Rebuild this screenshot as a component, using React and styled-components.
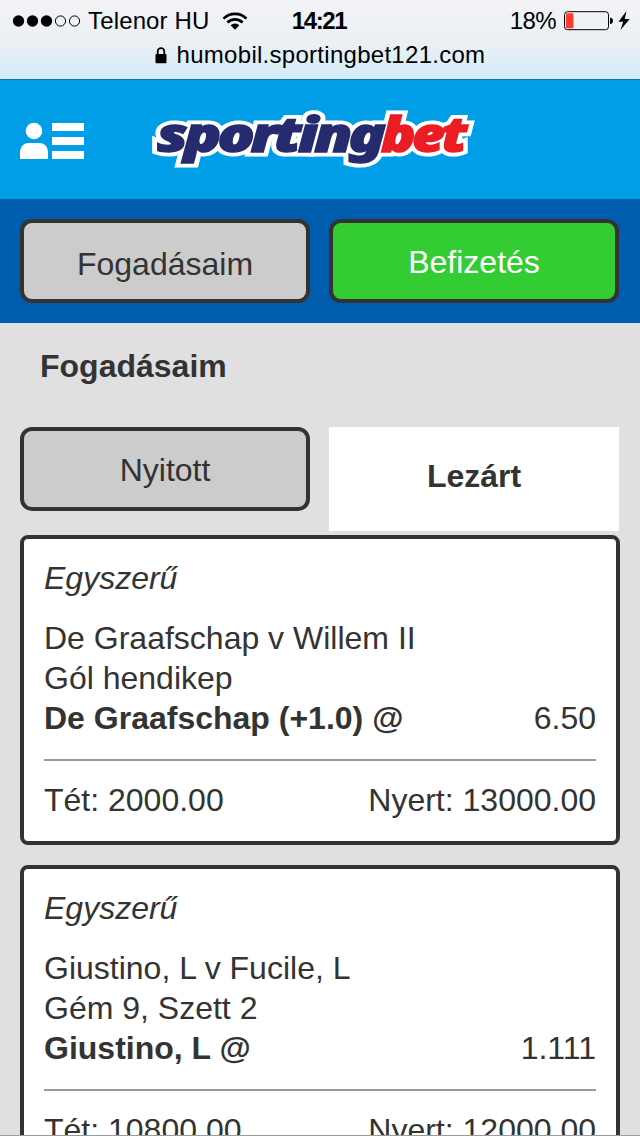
import React from 'react'
import styled, { createGlobalStyle } from 'styled-components'

const GlobalStyle = createGlobalStyle`
  * {
    box-sizing: border-box;
  }

  body {
    margin: 0;
    overflow: hidden;
    background-color: #e0e0e0;
    color: #333;
    font-family: "Liberation Sans", Arial, sans-serif;
    font-size: 32px;
    line-height: 40px;
  }
`;

const Screen = styled.div`
  display: flex;
  flex-direction: column;
  height: 1136px;
  overflow: hidden;
  border-bottom: 1px solid #9b9b9b;
`;

const BrowserBar = styled.header`
  flex: none;
  height: 80px;
  border-bottom: 1px solid #1c6f97;
  background: linear-gradient(#f3f3f5, #ebf0f5 55%, #d2edf9);
  color: #000;
  font-size: 24px;
`;

const StatusRow = styled.div`
  display: grid;
  grid-template-columns: 1fr auto 1fr;
  height: 41px;
  padding: 0 10px 0 12px;
  line-height: 41px;
`;

const StatusGroup = styled.div`
  display: flex;
  align-items: center;
  justify-content: ${({ $end }) => ($end ? 'flex-end' : 'flex-start')};
`;

const Carrier = styled.span`
  margin: 0 12px 0 7px;
  letter-spacing: 0.15px;
`;

const Clock = styled.span`
  padding-right: 4px;
  font-weight: bold;
  letter-spacing: -1.4px;
`;

const Charge = styled.span`
  margin-right: 8px;
  letter-spacing: -0.6px;
`;

const AddressRow = styled.div`
  display: flex;
  align-items: center;
  justify-content: center;
  gap: 10px;
  height: 28px;
  line-height: 28px;
`;

const Address = styled.span`
  letter-spacing: 0.28px;
`;

const SiteHeader = styled.div`
  display: flex;
  flex: none;
  align-items: flex-start;
  gap: 66px;
  height: 119px;
  padding: 22px 20px 0;
  background-color: #009ee6;
`;

const MenuIcon = styled.svg`
  margin-top: 20px;
`;

const Nav = styled.nav`
  display: grid;
  flex: none;
  grid-template-columns: 290px 290px;
  gap: 19px;
  height: 124px;
  padding: 20px;
  background-color: #005cad;
`;

const Button = styled.button`
  height: 84px;
  padding: ${({ $drop = 0 }) => `${$drop}px 0 0`};
  border: 4px solid #333;
  border-radius: 12px;
  background-color: ${({ $green }) => ($green ? '#3c3' : '#ccc')};
  color: ${({ $green }) => ($green ? '#fff' : '#333')};
  font: inherit;
  cursor: pointer;
`;

const Title = styled.h1`
  flex: none;
  margin: 0;
  padding: 23px 40px 41px;
  font-size: 32px;
  line-height: 40px;
`;

const Tabs = styled.div`
  display: grid;
  flex: none;
  grid-template-columns: 290px 290px;
  align-items: start;
  gap: 19px;
  padding: 0 20px;
`;

const ActiveTab = styled.button`
  height: 104px;
  padding: 0 0 6px;
  border: 0;
  background-color: #fff;
  color: #333;
  font: inherit;
  font-weight: bold;
`;

const BetList = styled.div`
  display: flex;
  flex-direction: column;
  gap: 20px;
  padding: 4px 20px 0;
`;

const BetCard = styled.article`
  flex: none;
  height: 310px;
  padding: 19px 20px 21px;
  border: 4px solid #333;
  border-radius: 8px;
  background-color: #fff;
`;

const BetType = styled.div`
  margin-bottom: 20px;
  font-style: italic;
`;

const Row = styled.div`
  display: flex;
  justify-content: space-between;
`;

const Totals = styled(Row)`
  margin-top: 21px;
  padding-top: 19px;
  border-top: 2px solid #999;
`;

const bets = [
  {
    type: 'Egyszerű',
    event: 'De Graafschap v Willem II',
    market: 'Gól hendikep',
    pick: 'De Graafschap (+1.0) @',
    odds: '6.50',
    stake: '2000.00',
    won: '13000.00',
  },
  {
    type: 'Egyszerű',
    event: 'Giustino, L v Fucile, L',
    market: 'Gém 9, Szett 2',
    pick: 'Giustino, L @',
    odds: '1.111',
    stake: '10800.00',
    won: '12000.00',
  },
]

const Signal = () => (
  <svg width="69" height="14" viewBox="0 0 69 14">
    {[0, 1, 2, 3, 4].map(i => (
      <circle
        key={i}
        cx={6.5 + i * 14}
        cy="7"
        r={i < 3 ? 5.7 : 5.1}
        fill={i < 3 ? '#000' : 'none'}
        stroke={i < 3 ? 'none' : '#000'}
      />
    ))}
  </svg>
)

const Wifi = () => (
  <svg width="26" height="18" viewBox="0 0 26 18">
    <g fill="none" stroke="#000" strokeWidth="2.7">
      <path d="M1.5 6.6a16.3 16.3 0 0 1 23 0" />
      <path d="M5.4 10.5a10.8 10.8 0 0 1 15.2 0" />
    </g>
    <path d="M13 17.7l-4.4-4.4a6.2 6.2 0 0 1 8.8 0z" />
  </svg>
)

const Battery = () => (
  <svg width="66" height="20" viewBox="0 0 66 20">
    <rect x="0.5" y="0.7" width="44" height="18" rx="3" fill="none" stroke="#000" />
    <rect x="2" y="2.2" width="7.4" height="15" rx="1" fill="#ff3b30" />
    <path d="M46 6.5c1.8.3 3 1.5 3 3.3s-1.2 3-3 3.3z" />
    <path d="M62.5 0L54.5 10.7h4.7L56.5 19l9.2-11h-5z" />
  </svg>
)

const Lock = () => (
  <svg width="12" height="17" viewBox="0 0 12 17">
    <path d="M2.7 8V4.4a3.3 3.3 0 0 1 6.6 0V8" fill="none" stroke="#000" strokeWidth="1.8" />
    <rect x="0.5" y="7" width="11" height="9.3" rx="0.8" />
  </svg>
)

const LogoSvg = styled.svg`
  font-family: "Noto Sans", "Open Sans", sans-serif;
  font-size: 48px;
  font-style: italic;
  font-weight: 900;
  letter-spacing: -3px;
`;

// the words are defined once, drawn as a white outline and then in colour
const Logo = () => (
  <LogoSvg width="330" height="76" viewBox="0 0 330 76">
    <defs>
      <text id="sporting" x="7" y="49.5" textLength="225" lengthAdjust="spacingAndGlyphs">sporting</text>
      <text id="bet" x="231" y="49.5" textLength="83" lengthAdjust="spacingAndGlyphs">bet</text>
    </defs>
    <g fill="#fff" stroke="#fff" strokeWidth="9" strokeMiterlimit="3">
      <use href="#sporting" />
      <use href="#bet" />
    </g>
    <g strokeWidth="1.4">
      <use href="#sporting" fill="#262a6e" stroke="#262a6e" />
      <use href="#bet" fill="#ec1c24" stroke="#ec1c24" />
    </g>
  </LogoSvg>
)

const Bet = ({ type, event, market, pick, odds, stake, won }) => (
  <BetCard>
    <BetType>{type}</BetType>
    <div>{event}</div>
    <div>{market}</div>
    <Row>
      <b>{pick}</b>
      <span>{odds}</span>
    </Row>
    <Totals>
      <span>Tét: {stake}</span>
      <span>Nyert: {won}</span>
    </Totals>
  </BetCard>
)

const App = () => {

  return (
    <Screen>
      <GlobalStyle />
      <BrowserBar>
        <StatusRow>
          <StatusGroup>
            <Signal />
            <Carrier>Telenor HU</Carrier>
            <Wifi />
          </StatusGroup>
          <Clock>14:21</Clock>
          <StatusGroup $end>
            <Charge>18%</Charge>
            <Battery />
          </StatusGroup>
        </StatusRow>
        <AddressRow>
          <Lock />
          <Address>humobil.sportingbet121.com</Address>
        </AddressRow>
      </BrowserBar>
      <SiteHeader>
        <MenuIcon width="64" height="38" viewBox="0 0 64 38" fill="#fff">
          <circle cx="14" cy="9" r="8.3" />
          <path d="M0 37V31C0 24 4 21 9 21h10c5 0 9 3 9 10v6z" />
          <path d="M32 1h32v8H32zM32 15h32v8H32zM32 29h32v8H32z" />
        </MenuIcon>
        <Logo />
      </SiteHeader>
      <Nav>
        <Button $drop={6}>Fogadásaim</Button>
        <Button $green $drop={2}>Befizetés</Button>
      </Nav>
      <Title>Fogadásaim</Title>
      <Tabs>
        <Button $drop={2}>Nyitott</Button>
        <ActiveTab>Lezárt</ActiveTab>
      </Tabs>
      <BetList>
        {bets.map(bet => (
          <Bet key={bet.event} {...bet} />
        ))}
      </BetList>
    </Screen>
  )
}

export default App
